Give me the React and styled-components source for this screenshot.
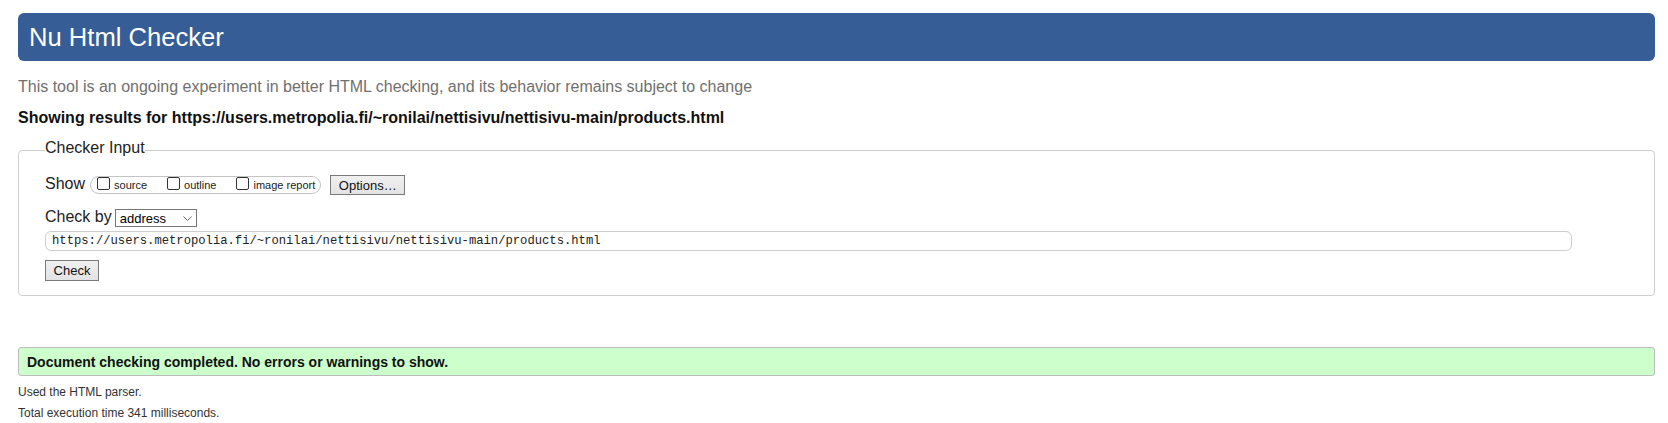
import React from "react";
import styled, { createGlobalStyle } from "styled-components";

const GlobalStyle = createGlobalStyle`
  body {
    margin: 0;
    background: #fff;
    color: #111;
    font-family: "Liberation Sans", Arial, sans-serif;
  }
`;

const Page = styled.div`
  padding: 13px 13px 0 18px;
`;

const Title = styled.h1`
  margin: 0;
  padding: 9px 11px;
  background: #365d95;
  color: #fff;
  border-radius: 6px;
  font-size: 25.6px;
  font-weight: normal;
  line-height: 30px;
`;

const Intro = styled.p`
  margin: 17px 0 0;
  font-size: 16px;
  color: #707070;
`;

const Results = styled.p`
  margin: 13px 0 0;
  font-size: 16px;
  font-weight: bold;
  color: #111;
`;

const Fieldset = styled.fieldset`
  margin: 12px 0 0;
  padding: 13px 26px 14px;
  border: 1px solid #cfcfcf;
  border-radius: 4px;
`;

const Legend = styled.legend`
  padding: 0 0 5px;
  font-size: 16px;
  color: #222;
`;

const Row = styled.div`
  display: flex;
  align-items: center;
  height: ${(p) => p.$height}px;
  margin-top: ${(p) => p.$gap || 0}px;
`;

const FieldLabel = styled.span`
  font-size: 16px;
  line-height: 18px;
  margin-bottom: 2px;
  color: #222;
`;

const OptionGroup = styled.div`
  display: flex;
  align-items: center;
  gap: 20px;
  box-sizing: border-box;
  height: 18px;
  margin-left: 5px;
  padding: 0 5px 0 6px;
  border: 1px solid #c4c4c4;
  border-radius: 9px;
`;

const OptionItem = styled.label`
  display: flex;
  align-items: center;
  gap: 4px;
  font-size: 11px;
  line-height: 13px;
  color: #222;
`;

const Box = styled.input`
  appearance: none;
  box-sizing: border-box;
  width: 13px;
  height: 13px;
  margin: 0 0 4px;
  background: #fff;
  border: 1px solid #333;
  border-radius: 2px;
`;

const Button = styled.button`
  box-sizing: border-box;
  width: ${(p) => p.$width}px;
  height: ${(p) => p.$height}px;
  margin-left: ${(p) => p.$left || 0}px;
  padding: 0;
  background: linear-gradient(#f0f0f0, #e3e3e3);
  border: 1px solid #7a7a7a;
  border-radius: 0;
  font-family: "Liberation Sans", Arial, sans-serif;
  font-size: 13px;
  color: #111;
`;

const SelectWrap = styled.div`
  position: relative;
  margin-left: 3px;
`;

const Select = styled.select`
  appearance: none;
  box-sizing: border-box;
  width: 82px;
  height: 18px;
  padding: 0 0 0 4px;
  background: #fff;
  border: 1px solid #767676;
  border-radius: 0;
  font-family: "Liberation Sans", Arial, sans-serif;
  font-size: 13px;
  color: #000;
`;

const Chevron = styled.svg`
  position: absolute;
  right: 5px;
  top: 7px;
  pointer-events: none;
`;

const UrlInput = styled.input`
  display: block;
  box-sizing: border-box;
  width: 1527px;
  height: 20px;
  margin-top: 4px;
  padding: 0 6px;
  border: 1px solid #cdcdcd;
  border-radius: 6px;
  font-family: "Liberation Mono", "DejaVu Sans Mono", monospace;
  font-size: 12.2px;
  color: #222;
`;

const SubmitRow = styled.div`
  margin-top: 9px;
  display: flex;
`;

const Success = styled.p`
  margin: 51px 0 0;
  padding: 6px 8px 5px;
  background: #ccffcc;
  border: 1px solid #bcbcbc;
  border-radius: 3px;
  font-size: 14px;
  line-height: 16px;
  font-weight: bold;
  color: #111;
`;

const Stats = styled.div`
  padding-top: 2px;
`;

const Note = styled.p`
  margin: 7px 0 0;
  font-size: 12px;
  line-height: 14px;
  color: #333;
`;

const url = "https://users.metropolia.fi/~ronilai/nettisivu/nettisivu-main/products.html";

const App = () => {
  return (
    <Page>
      <GlobalStyle />
      <Title>Nu Html Checker</Title>
      <Intro>
        This tool is an ongoing experiment in better HTML checking, and its behavior remains subject to change
      </Intro>
      <Results>Showing results for {url}</Results>

      <Fieldset>
        <Legend>Checker Input</Legend>
        <Row $height={20}>
          <FieldLabel>Show</FieldLabel>
          <OptionGroup>
            <OptionItem><Box type="checkbox" />source</OptionItem>
            <OptionItem><Box type="checkbox" />outline</OptionItem>
            <OptionItem><Box type="checkbox" />image report</OptionItem>
          </OptionGroup>
          <Button $width={75} $height={20} $left={9}>Options…</Button>
        </Row>

        <Row $height={18} $gap={14}>
          <FieldLabel>Check by</FieldLabel>
          <SelectWrap>
            <Select defaultValue="address">
              <option value="address">address</option>
              <option value="file">file upload</option>
              <option value="text">text input</option>
            </Select>
            <Chevron width="9" height="5" viewBox="0 0 9 5">
              <path d="M0.5 0.5 L4.5 4.5 L8.5 0.5" fill="none" stroke="#666" strokeWidth="1" />
            </Chevron>
          </SelectWrap>
        </Row>

        <UrlInput type="url" defaultValue={url} />

        <SubmitRow>
          <Button $width={54} $height={21}>Check</Button>
        </SubmitRow>
      </Fieldset>

      <Success>Document checking completed. No errors or warnings to show.</Success>
      <Stats>
        <Note>Used the HTML parser.</Note>
        <Note>Total execution time 341 milliseconds.</Note>
      </Stats>
    </Page>
  );
};

export default App;
